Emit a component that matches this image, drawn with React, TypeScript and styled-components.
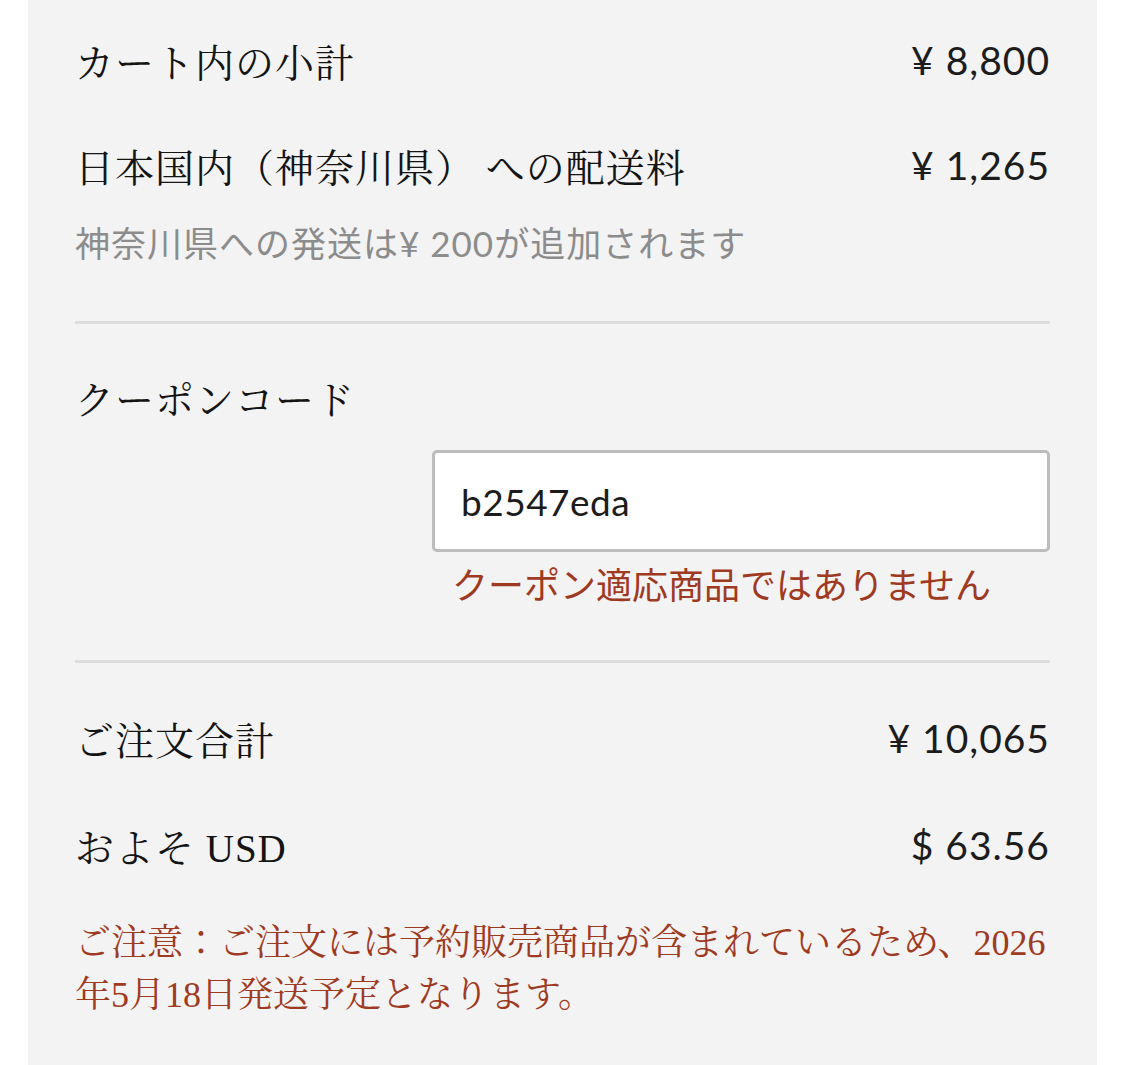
import React from "react";
import styled, { createGlobalStyle } from "styled-components";

const GlobalStyle = createGlobalStyle`
  body {
    margin: 0;
    background: #ffffff;
  }
`;

const serif = `"Liberation Serif", "Noto Serif CJK JP", "Noto Sans CJK JP", serif`;
const sans = `"Lato", "Noto Sans", "Noto Sans CJK JP", sans-serif`;

const Page = styled.div`
  padding: 0 28px;
`;

const Panel = styled.div`
  background: #f3f3f3;
  min-height: 1065px;
  padding: 32px 47px 0;
  box-sizing: border-box;
  color: #111;
`;

const Section = styled.section<{ $top?: number }>`
  display: flex;
  flex-direction: column;
  padding-top: ${({ $top = 0 }) => $top}px;
`;

const Row = styled.div<{ $gap?: number }>`
  display: flex;
  justify-content: space-between;
  align-items: center;
  height: 56px;
  margin-top: ${({ $gap = 0 }) => $gap}px;
`;

const Label = styled.span`
  font-family: ${serif};
  font-size: 39px;
  letter-spacing: 1px;
  color: #141414;
`;

const Amount = styled.span`
  font-family: ${sans};
  font-size: 39px;
  letter-spacing: 1px;
  color: #1c1c1c;
`;

const Note = styled.div`
  margin-top: 25px;
  font-family: ${sans};
  font-size: 35px;
  line-height: 50px;
  color: #8c8c8c;
  letter-spacing: 1px;
`;

const Divider = styled.hr<{ $top: number }>`
  border: none;
  border-top: 3px solid #dddddd;
  margin: ${({ $top }) => $top}px 0 0;
`;

const CouponField = styled.div`
  align-self: flex-end;
  width: 618px;
  margin-top: 25px;
  display: flex;
  flex-direction: column;
`;

const CodeInput = styled.input`
  height: 102px;
  box-sizing: border-box;
  border: 3px solid #bdbdbd;
  border-radius: 5px;
  background: #fff;
  padding: 0 26px;
  font-family: ${sans};
  font-size: 37px;
  letter-spacing: 0.5px;
  color: #1c1c1c;
  outline: none;
`;

const ErrorText = styled.div`
  margin-top: 8px;
  padding-left: 20px;
  font-family: ${sans};
  font-size: 36px;
  line-height: 50px;
  color: #9f3a22;
`;

const Notice = styled.p`
  margin: 44px 0 0;
  font-family: ${serif};
  font-size: 36px;
  line-height: 52px;
  color: #9f3a22;
`;

export default function App() {
  return (
    <>
      <GlobalStyle />
      <Page>
        <Panel>
          <Section>
            <Row>
              <Label>カート内の小計</Label>
              <Amount>¥ 8,800</Amount>
            </Row>
            <Row $gap={49}>
              <Label>日本国内（神奈川県） への配送料</Label>
              <Amount>¥ 1,265</Amount>
            </Row>
            <Note>神奈川県への発送は¥ 200が追加されます</Note>
          </Section>
          <Divider $top={53} />
          <Section $top={45}>
            <Row>
              <Label>クーポンコード</Label>
            </Row>
            <CouponField>
              <CodeInput defaultValue="b2547eda" />
              <ErrorText>クーポン適応商品ではありません</ErrorText>
            </CouponField>
          </Section>
          <Divider $top={50} />
          <Section $top={47}>
            <Row>
              <Label>ご注文合計</Label>
              <Amount>¥ 10,065</Amount>
            </Row>
            <Row $gap={51}>
              <Label>およそ USD</Label>
              <Amount>$ 63.56</Amount>
            </Row>
            <Notice>
              ご注意：ご注文には予約販売商品が含まれているため、2026年5月18日発送予定となります。
            </Notice>
          </Section>
        </Panel>
      </Page>
    </>
  );
}
